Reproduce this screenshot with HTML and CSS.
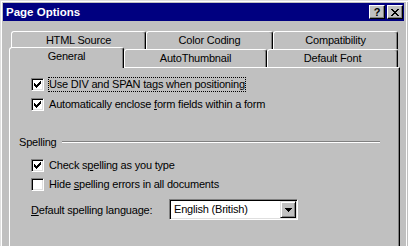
FILE: index.html
```html
<!DOCTYPE html>
<html lang="en">
<head>
  <meta charset="UTF-8" />
  <title>Page Options</title>
  <link rel="stylesheet" href="styles.css">
</head>
<body>

<div class="window">
  <div class="titlebar">
    <span class="title">Page Options</span>
    <div class="caption-buttons">
      <span class="caption-btn help">?</span>
      <span class="caption-btn">
        <svg width="8" height="7" viewBox="0 0 8 7" shape-rendering="crispEdges"><path d="M0 0h2v1H0zM6 0h2v1H6zM1 1h2v1H1zM5 1h2v1H5zM2 2h4v1H2zM3 3h2v1H3zM2 4h4v1H2zM1 5h2v1H1zM5 5h2v1H5zM0 6h2v1H0zM6 6h2v1H6z"/></svg>
      </span>
    </div>
  </div>

  <div class="dialog">
    <div class="tab-row">
      <div class="tab tab-source">HTML Source</div>
      <div class="tab tab-color">Color Coding</div>
      <div class="tab tab-compat">Compatibility</div>
    </div>
    <div class="tab-row">
      <div class="tab tab-general active">General</div>
      <div class="tab tab-thumb">AutoThumbnail</div>
      <div class="tab tab-font">Default Font</div>
    </div>

    <div class="panel">
      <div class="option">
        <span class="check"><svg width="7" height="7" viewBox="0 0 7 7" shape-rendering="crispEdges"><path d="M6 0h1v1H6zM5 1h2v1H5zM0 2h1v1H0zM4 2h3v1H4zM0 3h2v1H0zM3 3h3v1H3zM0 4h5v1H0zM1 5h3v1H1zM2 6h1v1H2z"/></svg></span>
        <span class="option-label focused">Use DIV and SPAN tags when positioning</span>
      </div>
      <div class="option second">
        <span class="check"><svg width="7" height="7" viewBox="0 0 7 7" shape-rendering="crispEdges"><path d="M6 0h1v1H6zM5 1h2v1H5zM0 2h1v1H0zM4 2h3v1H4zM0 3h2v1H0zM3 3h3v1H3zM0 4h5v1H0zM1 5h3v1H1zM2 6h1v1H2z"/></svg></span>
        <span class="option-label">Automatically enclose <u>f</u>orm fields within a form</span>
      </div>

      <div class="group-title">
        <span>Spelling</span>
        <span class="group-line"></span>
      </div>

      <div class="option spell-check">
        <span class="check"><svg width="7" height="7" viewBox="0 0 7 7" shape-rendering="crispEdges"><path d="M6 0h1v1H6zM5 1h2v1H5zM0 2h1v1H0zM4 2h3v1H4zM0 3h2v1H0zM3 3h3v1H3zM0 4h5v1H0zM1 5h3v1H1zM2 6h1v1H2z"/></svg></span>
        <span class="option-label">Check s<u>p</u>elling as you type</span>
      </div>
      <div class="option spell-hide">
        <span class="check"></span>
        <span class="option-label">Hide <u>s</u>pelling errors in all documents</span>
      </div>

      <div class="lang-row">
        <span class="lang-label"><u>D</u>efault spelling language:</span>
        <div class="combo">
          <span class="combo-value">English (British)</span>
          <span class="combo-btn"><svg width="7" height="4" viewBox="0 0 7 4" shape-rendering="crispEdges"><path d="M0 0h7v1H0zM1 1h5v1H1zM2 2h3v1H2zM3 3h1v1H3z"/></svg></span>
        </div>
      </div>
    </div>
  </div>
</div>

</body>
</html>
```

FILE: styles.css
```css
body {
  margin: 0;
  background: #c0c0c0;
  font-family: "Liberation Sans", Arial, sans-serif;
  font-size: 11px;
  letter-spacing: -0.2px;
  color: #000;
  overflow: hidden;
}

.window {
  box-sizing: border-box;
  width: 408px;
  height: 246px;
  overflow: hidden;
  background: #c0c0c0;
  border-left: 1px solid #dfdfdf;
  border-top: 1px solid #dfdfdf;
  box-shadow: inset 1px 1px #fff, inset -1px 0 #c0c0c0, inset -2px 0 #fff;
  padding: 2px 4px 0 2px;
}

/* title bar */
.titlebar {
  display: flex;
  align-items: center;
  justify-content: space-between;
  height: 18px;
  background: #000080;
  color: #fff;
  padding: 0 1px 0 3px;
}
.title {
  font-weight: 700;
  font-size: 11.5px;
  line-height: 18px;
  letter-spacing: 0;
}
.caption-buttons {
  display: flex;
  gap: 2px;
}
.caption-btn {
  box-sizing: border-box;
  width: 16px;
  height: 14px;
  display: flex;
  align-items: center;
  justify-content: center;
  background: #c0c0c0;
  color: #000;
  border: 1px solid;
  border-color: #fff #000 #000 #fff;
  box-shadow: inset -1px -1px #808080;
}
.caption-btn.help {
  font-weight: 700;
  font-size: 11px;
  line-height: 12px;
  letter-spacing: 0;
}

/* tabs */
.dialog {
  padding: 10px 4px 0 6px;
}
.tab-row {
  display: flex;
  align-items: flex-start;
  height: 18px;
  margin-left: 2px;
}
.tab {
  box-sizing: border-box;
  height: 18px;
  border: 1px solid;
  border-bottom: 0;
  border-color: #fff #000 transparent #fff;
  border-radius: 3px 3px 0 0;
  box-shadow: inset -1px 0 #808080;
  background: #c0c0c0;
  padding-top: 2px;
  line-height: 13px;
  text-align: center;
  white-space: nowrap;
}
.tab-source { width: 135px; }
.tab-color { width: 127px; }
.tab-compat { width: 125px; }
.tab-general { width: 115px; }
.tab-thumb { width: 143px; }
.tab-font { width: 131px; }
.tab.active {
  position: relative;
  z-index: 1;
  height: 21px;
  margin: -2px 0 0 -2px;
}

.panel {
  box-sizing: border-box;
  height: 200px;
  border: 1px solid;
  border-color: #fff #000 #000 #fff;
  box-shadow: inset -1px -1px #808080;
  padding: 9px 0 0 9px;
}

/* check boxes */
.option {
  display: flex;
  align-items: center;
  margin-left: 12px;
}
.option.second { margin-top: 5px; }
.option.spell-check { margin-top: 9px; }
.option.spell-hide { margin-top: 4px; }
.check {
  box-sizing: border-box;
  width: 13px;
  height: 13px;
  display: flex;
  align-items: center;
  justify-content: center;
  background: #fff;
  border: 1px solid;
  border-color: #808080 #fff #fff #808080;
  box-shadow: inset 1px 1px #000, inset -1px -1px #dfdfdf;
}
.option-label {
  margin-left: 4px;
  line-height: 13px;
  border: 1px dotted transparent;
  white-space: nowrap;
}
.option-label.focused { border-color: #000; }

/* group header */
.group-title {
  display: flex;
  align-items: flex-start;
  margin-top: 24px;
  line-height: 13px;
}
.group-line {
  flex: 1;
  height: 0;
  margin: 5px 19px 0 5px;
  border-top: 1px solid #808080;
  border-bottom: 1px solid #fff;
}

/* combo */
.lang-row {
  display: flex;
  align-items: center;
  margin: 7px 0 0 12px;
}
.lang-label {
  width: 138px;
  white-space: nowrap;
}
.combo {
  box-sizing: border-box;
  display: flex;
  width: 129px;
  height: 21px;
  background: #fff;
  border: 1px solid;
  border-color: #808080 #fff #fff #808080;
  box-shadow: inset 1px 1px #000, inset -1px -1px #dfdfdf;
  padding: 1px;
}
.combo-value {
  flex: 1;
  padding-left: 3px;
  line-height: 17px;
}
.combo-btn {
  box-sizing: border-box;
  width: 16px;
  height: 17px;
  display: flex;
  align-items: center;
  justify-content: center;
  background: #c0c0c0;
  border: 1px solid;
  border-color: #dfdfdf #000 #000 #dfdfdf;
  box-shadow: inset 1px 1px #fff, inset -1px -1px #808080;
}
```
